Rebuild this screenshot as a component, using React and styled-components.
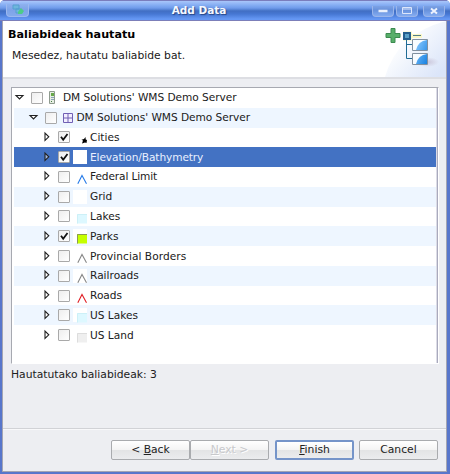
import React from "react";
import styled, { createGlobalStyle, css } from "styled-components";

const GlobalStyle = createGlobalStyle`
  * { box-sizing: border-box; }
  body { margin: 0; background: #fff; font-family: "DejaVu Sans", sans-serif; font-size: 10.75px; color: #202020; }
`;

const Window = styled.main`
  width: 450px;
  height: 474px;
  display: flex;
  flex-direction: column;
  background: #5876cb;
  border-radius: 5px 5px 0 0;
  overflow: hidden;
`;

const TitleBar = styled.header`
  height: 21px;
  display: flex;
  flex: none;
  border-top: 1px solid #7a7dbc;
  border-bottom: 1px solid #7c7fb9;
  background: linear-gradient(#a9c6fa 0, #86aef3 4px, #6f9bea 7px, #416fc3 10px, #4677d3 13px, #6598f4 18px);
`;

const AppIcon = styled.div`
  width: 23px;
  height: 13px;
  margin: 3px 0 0 6px;
  border-radius: 0 0 4px 4px;
  border: 1px solid #9cb8ef;
  border-top: 0;
  background: linear-gradient(#8fb1ee, #7da3e8 50%, #85aaeb);
  display: flex;
  justify-content: center;
`;

const Title = styled.h1`
  flex: 1;
  margin: 0;
  padding-right: 3px;
  text-align: center;
  color: #f4f8ff;
  font-size: 10.5px;
  line-height: 18px;
  text-shadow: 1px 1px 1px #284686;
`;

const WindowControls = styled.div`
  display: flex;
  padding: 5px 5px 0 0;
  gap: 2px;
`;

const Control = styled.button`
  width: 22px;
  height: 11px;
  padding: 0;
  margin-left: ${(p) => p.$space || 0}px;
  border: 1px solid #9ab5ea;
  border-top: 0;
  border-radius: 0 0 4px 4px;
  background: linear-gradient(#7da2e4, #6791dc 40%, #83abf0);
  display: flex;
  align-items: center;
  justify-content: center;
  svg { display: block; flex: none; }
`;

const Body = styled.div`
  flex: 1;
  margin: 0 3px 2px 2px;
  border: solid #a4a5b2;
  border-width: 0 1px 1px 1px;
  background: #edeef2;
  display: flex;
  flex-direction: column;
`;

const Banner = styled.section`
  height: 58px;
  flex: none;
  display: flex;
  justify-content: space-between;
  background: #fff;
  border-bottom: 2px solid #dddee3;
`;

const BannerText = styled.div`
  padding: 7px 0 0 5px;
`;

const Heading = styled.h2`
  margin: 0;
  font-size: 11.2px;
  line-height: 14px;
  color: #000;
`;

const Description = styled.p`
  margin: 7px 0 0 4px;
  line-height: 14px;
`;

const TreeBox = styled.section`
  height: 277px;
  flex: none;
  margin: 8px 7px 0 8px;
  border: 1px solid #a7a9b1;
  border-bottom-color: #fff;
  border-right-color: #fff;
  background: #fff;
  display: flex;
`;

const Rows = styled.div`
  flex: 1;
  margin-left: 2px;
`;

const RightEdge = styled.div`
  width: 2px;
  background: linear-gradient(90deg, #dcdce6 50%, #a9aabd 50%);
`;

const Row = styled.div`
  height: 19.78px;
  display: flex;
  align-items: center;
  padding-left: ${(p) => p.$depth * 13.5}px;
  background: ${(p) => (p.$selected ? "#4372c3" : p.$odd ? "#eef6ff" : "#fff")};
  color: ${(p) => (p.$selected ? "#e9f0ff" : "#202020")};
`;

const Expander = styled.svg`
  width: 12px;
  height: 12px;
  margin: -1px 5px 0 0;
  flex: none;
`;

const Check = styled.span`
  width: 12px;
  height: 12px;
  flex: none;
  border: 1px solid #a9a9a9;
  border-radius: 1px;
  background: linear-gradient(135deg, #eee, #fff);
  svg { display: block; }
`;

const Glyph = styled.svg`
  width: ${(p) => p.$w}px;
  height: 16px;
  margin: 0 ${(p) => p.$gap}px 0 ${(p) => p.$left}px;
  flex: none;
`;

const Label = styled.span`
  white-space: nowrap;
  font-size: 10.6px;
  line-height: 19px;
  letter-spacing: ${(p) => p.$tracking || 0}px;
`;

const Status = styled.p`
  margin: 3px 0 0 8px;
  font-size: 10.75px;
  line-height: 15px;
`;

const Actions = styled.footer`
  margin-top: auto;
  height: 43px;
  padding: 11px 8px 0 0;
  border-top: 1px solid #d1d2d6;
  box-shadow: inset 0 1px #f8f8fa;
  display: flex;
  justify-content: flex-end;
`;

const Action = styled.button`
  width: 79px;
  height: 20px;
  padding: 0 0 1px;
  margin-left: ${(p) => p.$space || 0}px;
  font: inherit;
  color: #222;
  border: 1px solid #a9abae;
  border-radius: 2px;
  background: linear-gradient(#fff 0, #f4f4f4 48%, #e3e4e5 52%, #ebecee);
  ${(p) => p.disabled && css`color: #c8c9cc; text-shadow: 1px 1px #fff;`}
  ${(p) => p.$primary && css`border: 2px solid #7594c9;`}
  u { text-underline-offset: 1px; }
`;

const layers = [
  { name: "DM Solutions' WMS Demo Server", tracking: -0.05, depth: 0, open: true, kind: "server" },
  { name: "DM Solutions' WMS Demo Server", tracking: -0.05, depth: 1, open: true, kind: "grid" },
  { name: "Cities", checked: true, kind: "cities" },
  { name: "Elevation/Bathymetry", tracking: -0.1, checked: true, selected: true, kind: "blank" },
  { name: "Federal Limit", tracking: -0.12, kind: "line", color: "#287ce8" },
  { name: "Grid", kind: "blank" },
  { name: "Lakes", kind: "fill", color: "#ddf8ff" },
  { name: "Parks", checked: true, kind: "fill", color: "#c5ff00", edge: "#8c9a55" },
  { name: "Provincial Borders", tracking: 0.05, kind: "line", color: "#888" },
  { name: "Railroads", kind: "line", color: "#888" },
  { name: "Roads", kind: "line", color: "#e12027" },
  { name: "US Lakes", kind: "fill", color: "#ddf8ff" },
  { name: "US Land", kind: "fill", color: "#efefef", edge: "#ddd" },
];

function LayerGlyph({ kind, color, edge }) {
  if (kind === "server") return (
    <Glyph $w={8} $left={5} $gap={7} viewBox="0 0 8 16">
      <path d="M1.5 1.5h5v12h-5z" fill="#e7eee3" stroke="#8e9a8e" />
      <path d="M3 3h3v3H3z" fill="#67a849" /><path d="M3 7.5h3M3 9.5h3" stroke="#8aa3b8" />
      <path d="M3 11.5h1" stroke="#477c42" />
    </Glyph>
  );
  if (kind === "grid") return (
    <Glyph $w={10} $left={6} $gap={4} viewBox="0 0 10 16">
      <path d="M.5 3.5h9v9h-9zM5 3v10M0 8h10" fill="#f2eeff" stroke="#7060b4" />
    </Glyph>
  );
  return (
    <Glyph $w={14} $left={3} $gap={3} viewBox="0 0 14 16">
      <path d="M0 1h14v14H0z" fill="#fff" />
      {kind === "cities" && <path d="M9 14.5l1-3-1.5-.8 2.5-.7 1.5-2 .2 2.5 1.3.4-.5 3-1.5-.4z" fill="#000" />}
      {kind === "line" && <path d="M4.8 14.8L9 6.5l4.5 8.3" fill="none" stroke={color} strokeWidth="1.1" />}
      {kind === "fill" && (
        <>
          <path d="M4 6h10v9.5H4z" fill={color} />
          <path d="M4.5 15.5v-9H14" fill="none" stroke={edge || "#cdf0f7"} />
        </>
      )}
    </Glyph>
  );
}

function TreeRow({ layer, index }) {
  return (
    <Row $depth={layer.depth ?? 2} $odd={index % 2 === 1} $selected={layer.selected}>
      <Expander viewBox="0 0 12 12">
        {layer.open
          ? <path d="M2 4.5h7L5.5 8z" fill="#fff" stroke="#222" strokeWidth="1.1" />
          : <path d="M4 2v7.5L7.8 5.8z" fill={layer.selected ? "#9eb5de" : "#fff"} stroke="#222" strokeWidth="1.1" />}
      </Expander>
      <Check>
        {layer.checked && <svg width="10" height="10"><path d="M2 4.7l2.2 3L8.5 2" fill="none" stroke="#111" strokeWidth="1.8" /></svg>}
      </Check>
      <LayerGlyph {...layer} />
      <Label $tracking={layer.tracking}>{layer.name}</Label>
    </Row>
  );
}

const Artwork = styled.svg`
  width: 90px;
  height: 56px;
  flex: none;
`;

function ResourceArt() {
  return (
    <Artwork viewBox="356 21 90 56">
      <defs>
        <linearGradient id="sweep" x1="0" y1="0" x2="1" y2=".8"><stop stopColor="#fff" /><stop offset=".4" stopColor="#f9fbfe" /><stop offset="1" stopColor="#dbe5f9" /></linearGradient>
        <linearGradient id="leaf" x1="0" y1="0" x2="1" y2="1"><stop stopColor="#8dcbff" /><stop offset="1" stopColor="#1781e1" /></linearGradient>
        <radialGradient id="shade"><stop stopColor="#c9c5d9" /><stop offset="1" stopColor="#c9c5d9" stopOpacity="0" /></radialGradient>
      </defs>
      <path d="M385 77Q397 34 446 21V77Z" fill="url(#sweep)" />
      <ellipse cx="427" cy="62" rx="12" ry="5" fill="url(#shade)" />
      <path d="M391 28.5h4v5h5v4h-5v5h-4v-5h-5v-4h5z" fill="#58ae69" stroke="#3c8b50" />
      <path d="M403 31.5h9v9h-9zM411 34h11v4h-11z" fill="#faf7c6" />
      <path d="M406.5 39v19.5h6M406.5 44.5h6" stroke="#216c94" fill="none" />
      <path d="M404 33h6v6h-6z" fill="#5ba1c7" stroke="#245f8e" strokeWidth="2" />
      <path d="M413 35.5h8" stroke="#527e86" />
      <path d="M412.5 39.5h15v11h-15zM412.5 53.5h15v11h-15z" fill="#f8fcff" stroke="#81909f" />
      <path d="M416 50Q418 41 427 40v10zM416 64Q418 55 427 54v10z" fill="url(#leaf)" />
    </Artwork>
  );
}

export default function App() {
  return (
    <>
      <GlobalStyle />
      <Window>
        <TitleBar>
          <AppIcon><svg width="15" height="13"><path d="M3 1h6v4H3zM6 5h5v4H6z" fill="#6eb6dc" stroke="#559fd0" /><path d="M8 8l3-4 3 3-2 3H8z" fill="#4dcc88" /></svg></AppIcon>
          <Title>Add Data</Title>
          <WindowControls>
            <Control aria-label="Minimize"><svg width="12" height="10"><path d="M1.5 5h9" stroke="#e8effc" strokeWidth="2.5" /></svg></Control>
            <Control aria-label="Maximize"><svg width="12" height="10"><path d="M1.5 1.5h9v6h-9zM2 3h8" fill="none" stroke="#dce6fb" /></svg></Control>
            <Control $space={3} aria-label="Close"><svg width="12" height="10"><path d="M3 2.5l6 5M9 2.5l-6 5" stroke="#edf2fd" strokeWidth="2" /></svg></Control>
          </WindowControls>
        </TitleBar>
        <Body>
          <Banner>
            <BannerText>
              <Heading>Baliabideak hautatu</Heading>
              <Description>Mesedez, hautatu baliabide bat.</Description>
            </BannerText>
            <ResourceArt />
          </Banner>
          <TreeBox>
            <Rows>{layers.map((layer, i) => <TreeRow key={i} layer={layer} index={i} />)}</Rows>
            <RightEdge />
          </TreeBox>
          <Status>Hautatutako baliabideak: 3</Status>
          <Actions>
            <Action>&lt; <u>B</u>ack</Action>
            <Action disabled><u>N</u>ext &gt;</Action>
            <Action $primary $space={6}><u>F</u>inish</Action>
            <Action $space={5}>Cancel</Action>
          </Actions>
        </Body>
      </Window>
    </>
  );
}
